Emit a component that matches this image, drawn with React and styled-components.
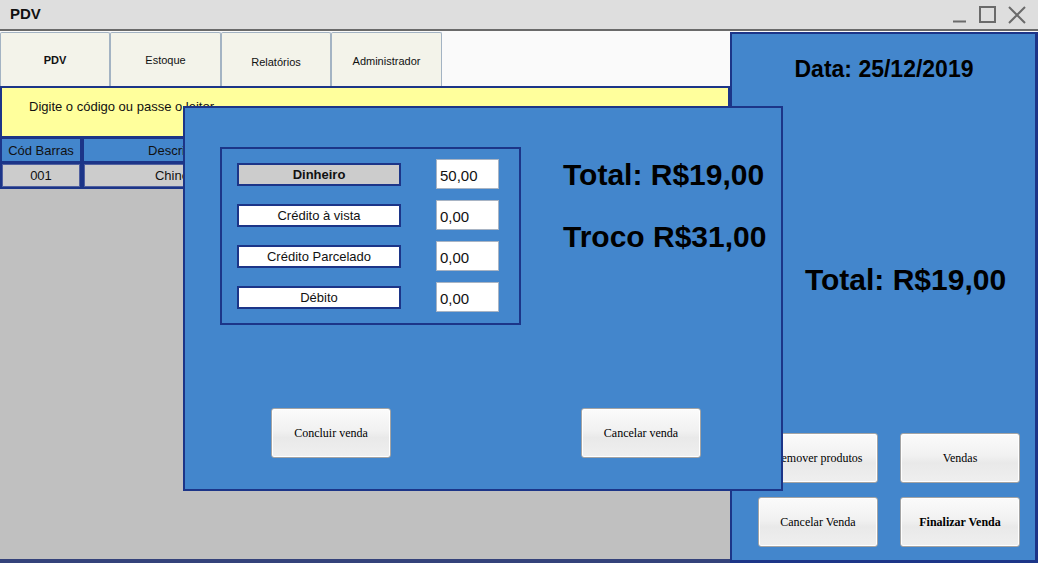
import React from 'react'
import styled, { createGlobalStyle } from 'styled-components'

const GlobalStyle = createGlobalStyle`
  html, body {
    margin: 0;
    padding: 0;
    background: #ffffff;
  }
  body {
    font-family: "Liberation Sans", Arial, sans-serif;
  }
  * {
    box-sizing: border-box;
  }
`;

const BLUE = '#4386cc';
const DARK = '#1c3588';

const Window = styled.div`
  position: relative;
  width: 1038px;
  height: 563px;
  overflow: hidden;
  display: flex;
  flex-direction: column;
  background: #fafafa;
`;

const TitleBar = styled.div`
  height: 31px;
  flex-shrink: 0;
  display: flex;
  align-items: center;
  justify-content: space-between;
  padding: 0 12px 2px 10px;
  background: #dedede;
  border-bottom: 2px solid #6a6a6a;
`;

const Title = styled.div`
  font-size: 15px;
  font-weight: bold;
  color: #111;
`;

const WindowButtons = styled.div`
  display: flex;
  align-items: center;
  gap: 12px;
  padding-top: 2px;
`;

const Body = styled.div`
  flex: 1;
  display: flex;
  padding-top: 1px;
  min-height: 0;
`;

const LeftColumn = styled.div`
  width: 730px;
  display: flex;
  flex-direction: column;
  background: #c0c0c0;
  border-bottom: 4px solid #34427a;
`;

const TabRow = styled.div`
  height: 54px;
  display: flex;
  background: #fafafa;
`;

const Tab = styled.div`
  width: ${p => p.$width}px;
  display: flex;
  align-items: center;
  justify-content: center;
  padding-top: ${p => p.$shift || 0}px;
  background: #f3f3ea;
  border: 1px solid #a3b3c3;
  border-bottom: none;
  border-radius: 2px 2px 0 0;
  font-size: 11px;
  font-weight: ${p => (p.$active ? 'bold' : 'normal')};
  color: #111;
`;

const Banner = styled.div`
  height: 52px;
  padding: 11px 0 0 27px;
  background: #ffff9c;
  border: 2px solid ${DARK};
  font-size: 13px;
  color: #111;
`;

const Table = styled.div`
  display: grid;
  grid-template-columns: 78px 186px 1fr;
  column-gap: 4px;
  row-gap: 3px;
  padding: 1px 2px 2px;
  background: ${DARK};
`;

const HeaderCell = styled.div`
  height: 22px;
  display: flex;
  align-items: center;
  justify-content: center;
  background: ${BLUE};
  font-size: 13px;
  color: #111;
`;

const DataCell = styled.div`
  height: 23px;
  display: flex;
  align-items: center;
  justify-content: center;
  background: #cccccc;
  border: 1px solid #5060a0;
  font-size: 13px;
  color: #111;
`;

const RightPanel = styled.div`
  flex: 1;
  display: flex;
  flex-direction: column;
  align-items: center;
  padding: 22px 15px 13px 26px;
  background: ${BLUE};
  border: 2px solid ${DARK};
  border-right-width: 3px;
  border-bottom-width: 3px;
`;

const DateText = styled.div`
  font-size: 23px;
  font-weight: bold;
  color: #000;
  margin-right: 10px;
`;

const PanelTotal = styled.div`
  flex: 1;
  padding-top: 180px;
  font-size: 30px;
  font-weight: bold;
  color: #000;
  margin-left: 33px;
  white-space: nowrap;
`;

const ButtonGrid = styled.div`
  align-self: stretch;
  display: grid;
  grid-template-columns: 120px 120px;
  column-gap: 22px;
  row-gap: 14px;
`;

const Button = styled.button`
  width: 120px;
  height: 50px;
  padding: 0;
  background: linear-gradient(#fbfbfb, #f1f1f1 45%, #e9e9e9 60%, #efefef);
  border: 1px solid #a4a4a4;
  border-radius: 3px;
  box-shadow: inset 0 0 0 1px #ffffff;
  font-family: "Liberation Serif", "Times New Roman", serif;
  font-size: 12px;
  font-weight: ${p => (p.$bold ? 'bold' : 'normal')};
  color: #000;
  white-space: nowrap;
  overflow: hidden;
`;

const Modal = styled.div`
  position: absolute;
  left: 183px;
  top: 106px;
  width: 600px;
  height: 385px;
  display: flex;
  flex-direction: column;
  padding: 39px 0 31px 35px;
  background: ${BLUE};
  border: 2px solid ${DARK};
`;

const ModalTop = styled.div`
  display: flex;
  gap: 42px;
`;

const PaymentBox = styled.div`
  width: 301px;
  height: 178px;
  display: flex;
  flex-direction: column;
  gap: 11px;
  padding: 10px 0 0 15px;
  border: 2px solid ${DARK};
`;

const PaymentRow = styled.div`
  height: 30px;
  display: flex;
  align-items: center;
  gap: 35px;
`;

const PaymentLabel = styled.div`
  width: 164px;
  height: 23px;
  display: flex;
  align-items: center;
  justify-content: center;
  background: ${p => (p.$selected ? '#cccccc' : '#ffffff')};
  border: 2px solid ${DARK};
  font-size: 13px;
  font-weight: ${p => (p.$selected ? 'bold' : 'normal')};
  color: #111;
`;

const AmountInput = styled.div`
  width: 63px;
  height: 30px;
  display: flex;
  align-items: center;
  padding: 2px 0 0 3px;
  background: #ffffff;
  border: 1px solid #a8b4c4;
  font-size: 15px;
  color: #111;
`;

const Totals = styled.div`
  display: flex;
  flex-direction: column;
  gap: 30px;
  padding-top: 12px;
`;

const BigText = styled.div`
  height: 32px;
  line-height: 32px;
  font-size: 30px;
  font-weight: bold;
  color: #000;
  white-space: nowrap;
`;

const ModalFooter = styled.div`
  margin-top: auto;
  display: flex;
  justify-content: space-between;
  padding: 0 80px 0 51px;
`;

const payments = [
  { label: 'Dinheiro', value: '50,00', selected: true },
  { label: 'Crédito à vista', value: '0,00' },
  { label: 'Crédito Parcelado', value: '0,00' },
  { label: 'Débito', value: '0,00' },
];

const tabs = [
  { label: 'PDV', width: 110, active: true },
  { label: 'Estoque', width: 111 },
  { label: 'Relatórios', width: 110, shift: 4 },
  { label: 'Administrador', width: 111, shift: 2 },
];

function WindowControls() {
  return (
    <WindowButtons>
      <svg width="15" height="16" viewBox="0 0 15 16">
        <line x1="1" y1="14.5" x2="14" y2="14.5" stroke="#6a6a6a" strokeWidth="2" />
      </svg>
      <svg width="17" height="17" viewBox="0 0 17 17">
        <rect x="1" y="1" width="15" height="15" fill="none" stroke="#6a6a6a" strokeWidth="2" />
      </svg>
      <svg width="18" height="18" viewBox="0 0 18 18">
        <path d="M1 1 L17 17 M17 1 L1 17" stroke="#6a6a6a" strokeWidth="2" fill="none" />
      </svg>
    </WindowButtons>
  );
}

export default function App() {
  return (
    <>
      <GlobalStyle />
      <Window>
        <TitleBar>
          <Title>PDV</Title>
          <WindowControls />
        </TitleBar>
        <Body>
          <LeftColumn>
            <TabRow>
              {tabs.map(t => (
                <Tab key={t.label} $width={t.width} $active={t.active} $shift={t.shift}>
                  {t.label}
                </Tab>
              ))}
            </TabRow>
            <Banner>Digite o código ou passe o leitor</Banner>
            <Table>
              <HeaderCell>Cód Barras</HeaderCell>
              <HeaderCell>Descrição</HeaderCell>
              <HeaderCell />
              <DataCell>001</DataCell>
              <DataCell>Chinelo</DataCell>
              <DataCell />
            </Table>
          </LeftColumn>
          <RightPanel>
            <DateText>Data: 25/12/2019</DateText>
            <PanelTotal>Total: R$19,00</PanelTotal>
            <ButtonGrid>
              <Button>Remover produtos</Button>
              <Button>Vendas</Button>
              <Button>Cancelar Venda</Button>
              <Button $bold>Finalizar Venda</Button>
            </ButtonGrid>
          </RightPanel>
        </Body>
        <Modal>
          <ModalTop>
            <PaymentBox>
              {payments.map(p => (
                <PaymentRow key={p.label}>
                  <PaymentLabel $selected={p.selected}>{p.label}</PaymentLabel>
                  <AmountInput>{p.value}</AmountInput>
                </PaymentRow>
              ))}
            </PaymentBox>
            <Totals>
              <BigText>Total: R$19,00</BigText>
              <BigText>Troco R$31,00</BigText>
            </Totals>
          </ModalTop>
          <ModalFooter>
            <Button>Concluir venda</Button>
            <Button>Cancelar venda</Button>
          </ModalFooter>
        </Modal>
      </Window>
    </>
  );
}
